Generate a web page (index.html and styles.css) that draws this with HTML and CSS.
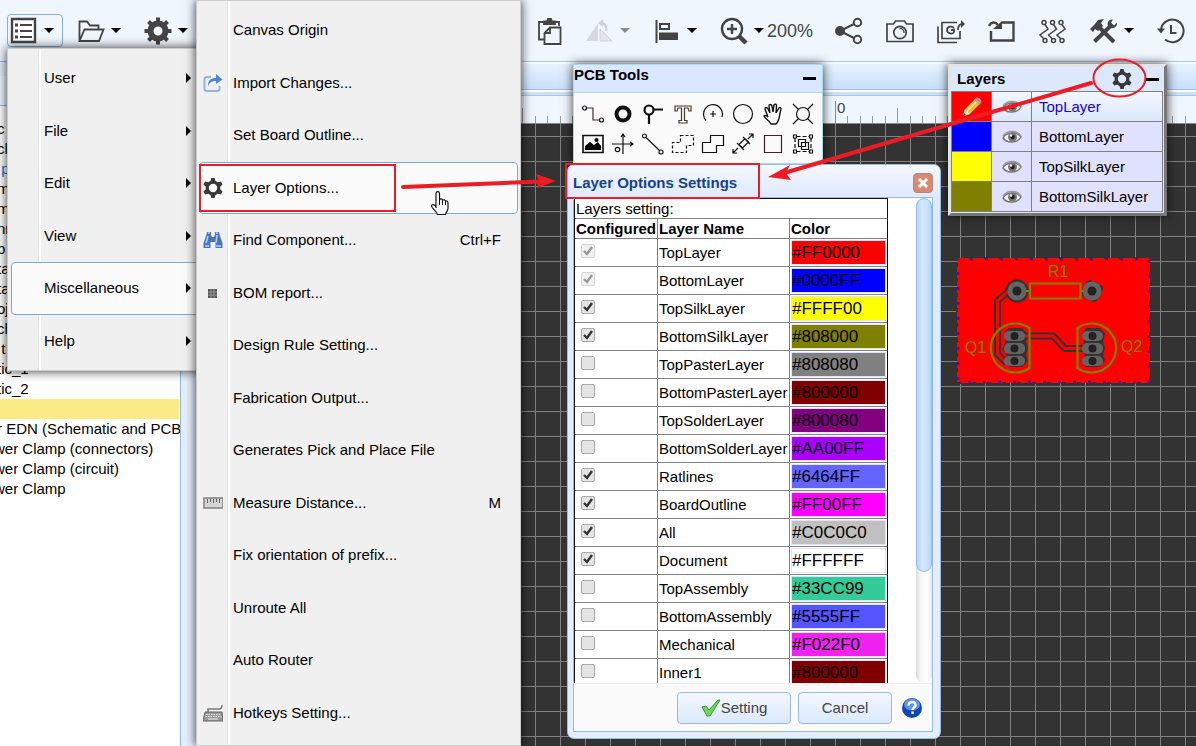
FILE: index.html
```html
<!DOCTYPE html>
<html lang="en">
<head>
<meta charset="utf-8">
<title>PCB Editor</title>
<link rel="stylesheet" href="styles.css">
</head>
<body>
<svg class="defs" aria-hidden="true">
  <symbol id="gear6" viewBox="0 0 20 20"><circle cx="10" cy="10" r="5.800" fill="none" stroke="#383838" stroke-width="3.200"/><g fill="#383838"><path id="tooth" d="M7.500 3.500L8.300 0h3.400l.8 3.500z"/><use href="#tooth" transform="rotate(60 10 10)"/><use href="#tooth" transform="rotate(120 10 10)"/><use href="#tooth" transform="rotate(180 10 10)"/><use href="#tooth" transform="rotate(240 10 10)"/><use href="#tooth" transform="rotate(300 10 10)"/></g></symbol>
  <symbol id="eye" viewBox="0 0 20 14"><path d="M1 8C4 2 15 1 19 7c-3 6-14 7-18 1z" fill="#f4f4f6" stroke="#777" stroke-width="1.500"/><path d="M1 6C5 0 15 0 19 6" fill="none" stroke="#999" stroke-width="1.500"/><circle cx="10.500" cy="7" r="4.500" fill="#777"/><circle cx="10.500" cy="7" r="2.300" fill="#222"/><circle cx="9" cy="5.500" r="1.300" fill="#eee"/></symbol>
</svg>

<header class="toolbar">
  <div class="tools-left">
    <button class="tool framed" aria-label="Menu"><svg class="ic" viewBox="0 0 28 28"><path d="M2 2h23v23H2z" fill="#fff" stroke="#444" stroke-width="2.400"/><path d="M10 8h12M10 14h12M10 20h12" stroke="#444" stroke-width="2"/><path d="M5 8h3M5 14h3M5 20h3" stroke="#444" stroke-width="3"/></svg><i class="caret"></i></button>
    <button class="tool" aria-label="Open"><svg class="ic" viewBox="0 0 28 28" fill="none" stroke="#444" stroke-width="1.800"><path d="M2.500 24V4.500h7.500l3 4h8.500v4M2.500 24l5-11.500h19L22 24z"/></svg><i class="caret"></i></button>
    <button class="tool" aria-label="Settings"><svg class="ic" viewBox="0 0 28 28"><circle cx="14" cy="14" r="7.500" fill="none" stroke="#444" stroke-width="6"/><g stroke="#444" stroke-width="4"><path d="M14 .5v5M14 22.500v5M.5 14h5M22.500 14h5M4.500 4.500l3.500 3.500M20 20l3.500 3.500M4.500 23.500L8 20M20 8l3.500-3.500"/></g></svg><i class="caret"></i></button>
  </div>
  <div class="tools-right">
    <button class="tool" aria-label="Paste"><svg class="ic" viewBox="0 0 28 28" fill="none" stroke="#444" stroke-width="1.800"><path d="M9 22.500H4V5h4M20 5h4v4"/><path d="M9 7V4.500h3L13 2h3l1 2.500h3V7z" fill="#444"/><path d="M15 10.500h10.500V27H9.500V16zM15 10.500V16H9.500"/></svg></button>
    <button class="tool" aria-label="Mirror" disabled><svg class="ic" viewBox="0 0 28 28"><path d="M0 24L12 6v18z" fill="#d4d8dc"/><path d="M14 24V12l12 12z" fill="#e3e7ea" stroke="#cfd3d7"/><path d="M20 14c1-5-1-8-5-8" fill="none" stroke="#cfd3d7" stroke-width="2.400"/><path d="M17 2v8l-5-4z" fill="#cfd3d7"/></svg><i class="caret dim"></i></button>
    <button class="tool" aria-label="Align"><svg class="ic" viewBox="0 0 28 28"><path d="M3.500 3v23" stroke="#444" stroke-width="2"/><path d="M7 7h9v5H7z" fill="none" stroke="#444" stroke-width="2"/><path d="M6 15.500h19V23H6z" fill="#444"/></svg><i class="caret"></i></button>
    <button class="tool" aria-label="Zoom"><svg class="ic" viewBox="0 0 28 28" fill="none" stroke="#444"><circle cx="12" cy="12" r="10" stroke-width="2.400"/><path d="M12 7v10M7 12h10" stroke-width="2.400"/><path d="M19 19l7 7" stroke-width="4.500"/></svg><i class="caret"></i><span class="zoom">200%</span></button>
    <button class="tool" aria-label="Share"><svg class="ic" viewBox="0 0 28 28" fill="none" stroke="#444" stroke-width="2"><path d="M5 14l17-8.500M5 14l17 8.500"/><circle cx="5" cy="14" r="4" fill="#444"/><circle cx="22.500" cy="5.500" r="3.700" fill="#eff6fe"/><circle cx="22.500" cy="22.500" r="3.700" fill="#eff6fe"/></svg></button>
    <button class="tool" aria-label="Screenshot"><svg class="ic" viewBox="0 0 28 28" fill="none" stroke="#444" stroke-width="1.700"><path d="M1 7h6.500l2-3h9l2 3H27v17.500H1z"/><circle cx="14" cy="15.500" r="6.200"/><path d="M13.500 11.500a4 4 0 0 1 4.500 4.500" stroke-width="1.300"/></svg></button>
    <button class="tool" aria-label="Generate Gerber"><svg class="ic" viewBox="0 0 28 28" fill="none" stroke="#444" stroke-width="1.700"><path d="M20 5.500H5v16h18V14M1 9.500V25.500h19"/><path d="M17 11.500c-1-3-7-2.500-7 1.500s6 4.500 7 2V13h-3" stroke-width="1.800"/><path d="M21 13c0-5 2-6 5-6"/><path d="M24 3l4 4-4 4z" fill="#444" stroke="none"/></svg></button>
    <button class="tool" aria-label="Import"><svg class="ic" viewBox="0 0 28 28" fill="none" stroke="#444" stroke-width="2.400"><path d="M14 5.500h11.500v18H3V14"/><path d="M1 9c2-4 6-5 9-1" stroke-width="2.400"/><path d="M5 12h9V4z" fill="#444" stroke="none"/></svg></button>
    <button class="tool" aria-label="Auto Router"><svg class="ic" viewBox="0 0 28 28" fill="none" stroke="#444" stroke-width="1.500"><g><circle cx="5" cy="5.500" r="2"/><path d="M6 7.500l3 4.500-8 6 4 4"/><circle cx="6" cy="23.500" r="2"/></g><g transform="translate(8.500)"><circle cx="5" cy="5.500" r="2"/><path d="M6 7.500l3 4.500-8 6 4 4"/><circle cx="6" cy="23.500" r="2"/></g><g transform="translate(17)"><circle cx="5" cy="5.500" r="2"/><path d="M6 7.500l3 4.500-8 6 4 4"/><circle cx="6" cy="23.500" r="2"/></g></svg></button>
    <button class="tool" aria-label="Tools"><svg class="ic" viewBox="0 0 28 28" fill="none" stroke="#444"><path d="M9 10l15 15" stroke-width="4"/><path d="M0 12l5-5 3-4 6-1-3 4 2 3-5 5-3-2-2 3z" fill="#444" stroke="none"/><path d="M4.500 24.500L20 9.500" stroke-width="4"/><path d="M23 2.500c-5-1-7 5-4 7.500s8.500 1 8-4.500l-3 3-3-3z" fill="#444" stroke="none"/></svg><i class="caret"></i></button>
    <button class="tool" aria-label="History"><svg class="ic" viewBox="0 0 28 28" fill="none" stroke="#444" stroke-width="2"><path d="M4 13a11.300 11.300 0 1 1 4 9.500M14 8v8h5.500"/><path d="M0 11.500h8l-4 5z" fill="#444" stroke="none"/></svg></button>
  </div>
</header>

<main class="main">
  <aside class="side">
    <div class="side-tabs"></div>
    <ul class="tree">
      <li>c</li><li>ch</li><li class="blue">.p</li><li>m</li><li>mp</li><li>nr</li><li>b</li><li>ta</li><li>ta</li><li>oje</li><li>ch</li><li>&nbsp;t</li><li>tic_1</li><li>tic_2</li><li class="on"></li><li>r EDN (Schematic and PCB</li><li class="deep">wer Clamp (connectors)</li><li class="deep">wer Clamp (circuit)</li><li class="deep">wer Clamp</li>
    </ul>
  </aside>
  <section class="work">
    <div class="tabs"></div>
    <svg class="ruler">
      <defs><pattern id="ticks" x="14" width="125" height="27" patternUnits="userSpaceOnUse"><path d="M12.500 20v7M25.500 20v7M37.500 20v7M50.500 20v7M75.500 20v7M87.500 20v7M100.500 20v7M112.500 20v7M.5 12v15M62.500 12v15" stroke="#999"/></pattern></defs>
      <rect width="100%" height="27" fill="url(#ticks)"/>
      <path d="M639.500 5v22" stroke="#888"/><text x="641" y="17">0</text>
    </svg>
    <svg class="canvas">
      <defs><pattern id="grid" width="25" height="25" x="14" y="12" patternUnits="userSpaceOnUse"><path d="M.5 0v25M0 .5h25" stroke="#808080"/></pattern></defs>
      <rect width="100%" height="100%" fill="url(#grid)"/>
      <g transform="translate(-196 -124)">
        <rect x="957" y="258" width="193" height="125" fill="#f00"/>
        <rect x="958" y="259" width="191" height="123" fill="none" stroke="#7a0080" stroke-width="3" stroke-dasharray="3 12" stroke-dashoffset="-12"/>
        <rect x="957" y="258" width="193" height="125" fill="none" stroke="#333" stroke-width="2" stroke-dasharray="4 11" stroke-dashoffset="-12"/>
        <g fill="#333"><circle cx="1017" cy="291" r="11.500"/><circle cx="1092" cy="291" r="11" stroke="#f00" stroke-width="3" stroke-dasharray="11 6"/>
          <path d="M1004 334l4-6h14l6 6-2 8 2 6-2 7 2 6-6 6h-13l-5-6 3-6-5-6 4-7zM1082 334l4-6h14l5 6-2 8 2 6-2 7 2 6-6 6h-13l-4-6 3-6-4-6 3-7z"/></g>
        <g fill="none"><path d="M1012 288l-14.500 13v53l9 9M1025 336h28l12 12.500h20" stroke="#333" stroke-width="7"/><path d="M1012 288l-14.500 13v53l9 9M1025 336h28l12 12.500h20" stroke="#f00" stroke-width="3"/></g>
        <g fill="#646464"><circle cx="1017" cy="291" r="9.500"/><circle cx="1092" cy="291" r="9.500"/>
          <rect x="1004" y="331" width="21" height="10" rx="5"/><rect x="1004" y="343" width="21" height="11" rx="5"/><rect x="1004" y="356" width="21" height="10" rx="5"/>
          <rect x="1082" y="331" width="21" height="10" rx="5"/><rect x="1082" y="343" width="21" height="11" rx="5"/><rect x="1082" y="356" width="21" height="10" rx="5"/></g>
        <g fill="#222"><circle cx="1017" cy="291" r="4.500"/><circle cx="1092" cy="291" r="4.500"/><circle cx="1014.500" cy="336" r="4"/><circle cx="1014.500" cy="348.500" r="4"/><circle cx="1014.500" cy="361" r="4"/><circle cx="1092.500" cy="336" r="4"/><circle cx="1092.500" cy="348.500" r="4"/><circle cx="1092.500" cy="361" r="4"/></g>
        <g fill="none" stroke="#808000" stroke-width="2.200"><path d="M1030 283.500h50.500v15H1030zM1026 291h4M1080 291h3"/><path d="M1029.500 328v40a24.500 24.500 0 1 1 0-40z"/><path d="M1077.500 328v40a24.500 24.500 0 1 0 0-40z"/></g>
        <g class="silk"><text x="1048" y="277">R1</text><text x="965" y="353">Q1</text><text x="1121" y="352">Q2</text></g>
      </g>
    </svg>
  </section>
</main>

<section class="win pcb">
  <header class="pcb-head"><h2>PCB Tools</h2><button class="min" aria-label="Minimize"></button></header>
  <div class="pcb-grid">
    <button aria-label="Track"><svg viewBox="0 0 24 24"><circle cx="3.500" cy="6" r="2"/><circle cx="20.500" cy="18" r="2"/><path d="M5.500 6h6.500v12h6.500" stroke="#502040"/></svg></button>
    <button aria-label="Pad"><svg viewBox="0 0 24 24"><circle cx="12" cy="12" r="6.500" stroke-width="4"/></svg></button>
    <button aria-label="Via"><svg viewBox="0 0 24 24"><circle cx="8" cy="8" r="4.500" stroke-width="2.200"/><path d="M12.500 7.500H22M8 12.500V22" stroke-width="2.200"/></svg></button>
    <button aria-label="Text"><svg viewBox="0 0 24 24"><path d="M4 4h16v5h-2l-1-3h-3.500v12.500h2.500V21H8v-2.500h2.500V6H7L6 9H4z" stroke="#4a3a28"/></svg></button>
    <button aria-label="Arc"><svg viewBox="0 0 24 24"><path d="M21 15A9.500 9.500 0 1 0 5 18.500M12 9v6M9 12h6"/></svg></button>
    <button aria-label="Circle"><svg viewBox="0 0 24 24"><circle cx="12" cy="12" r="9.500"/></svg></button>
    <button aria-label="Move"><svg viewBox="0 0 24 24"><path d="M10 22c-2-4-6-5-7-8 1-1.500 3 0 4 1L4 7c0-2 2-2 3 0l2 4-1-7c0-2 2.500-2 3 0l1 6 1-7c1-1.500 2.500-1 2.500 1L15 11l3-5c1-1 2.500 0 2 1.500-2 5-1 11-5 14.500z" stroke-width="1.400"/></svg></button>
    <button aria-label="Hole"><svg viewBox="0 0 24 24"><circle cx="12" cy="12" r="6.500"/><path d="M2 2l5.500 5.500M22 2l-5.500 5.500M2 22l5.500-5.500M22 22l-5.500-5.500"/></svg></button>
    <button aria-label="Image"><svg viewBox="0 0 24 24"><path d="M2 3.500h20v17H2z" stroke-width="1.600"/><path d="M4 18v-4l5-4 4 3 4-3 3 4v4z" fill="#000" stroke="none"/><circle cx="15.500" cy="8" r="1.500" fill="#000"/></svg></button>
    <button aria-label="Canvas Origin"><svg viewBox="0 0 24 24"><path d="M12 2v20M1 12h21M10 5l2-3 2 3M19 10l3 2-3 2"/><circle cx="6.500" cy="17.500" r="2.200"/></svg></button>
    <button aria-label="Dimension"><svg viewBox="0 0 24 24"><circle cx="3.500" cy="4" r="2"/><circle cx="20" cy="20" r="2"/><path d="M5 5.500l13.500 13"/></svg></button>
    <button aria-label="Copper Area"><svg viewBox="0 0 24 24"><path d="M9.500 3.500h13v10h-7v7h-14v-10h8z" stroke-dasharray="3 2"/></svg></button>
    <button aria-label="Solid Region"><svg viewBox="0 0 24 24"><path d="M9.500 3.500h13v10h-7v7h-14v-10h8z"/></svg></button>
    <button aria-label="Protractor"><svg viewBox="0 0 24 24"><path d="M2 21l5-5M17 7l5-5M22 6V2h-4M2 17v4h4M8 12.500l6-6 3.500 3.500-6 6zM6 11l7 7M12 5l7 7"/></svg></button>
    <button aria-label="Rect"><svg viewBox="0 0 24 24"><path d="M3.500 3.500h17v17h-17z" stroke="#3a2030"/></svg></button>
    <button aria-label="Group"><svg viewBox="0 0 24 24"><path d="M7.500 7.500h7v7h-7zM10.500 10.500h7v7h-7zM2.500 3h3v3h-3zM18.500 3h3v3h-3zM2.500 18h3v3h-3zM18.500 18h3v3h-3z"/><path d="M5.500 4.500h13M4 6v12M20 6v12M5.500 19.500h13" stroke-dasharray="4 2"/></svg></button>
  </div>
</section>

<section class="win layers">
  <header class="lay-head"><h2>Layers</h2><button class="plain" aria-label="Layer options"><svg width="20" height="20"><use href="#gear6"/></svg></button><button class="min" aria-label="Minimize"></button></header>
  <table class="lay-table">
    <tr class="sel"><td class="c-red"><svg class="pencil" width="22" height="22" viewBox="0 0 22 22"><path d="M2 20l2-7L14 3l5 5L9 18z" fill="#f7b42c" stroke="#a86a10"/><path d="M6 15L16 5" stroke="#ffe08a" stroke-width="2"/><path d="M2 20l2-7 5 5z" fill="#fbe6c4"/><path d="M2 20l1-3 2 2z" fill="#222"/><path d="M13 4l2-2 5 5-2 2z" fill="#aaa"/><path d="M15 2c2-2 7 3 5 5z" fill="#ef8a8a"/></svg></td><td><svg width="20" height="14"><use href="#eye"/></svg></td><td>TopLayer</td></tr>
    <tr><td class="c-blue"></td><td><svg width="20" height="14"><use href="#eye"/></svg></td><td>BottomLayer</td></tr>
    <tr><td class="c-yellow"></td><td><svg width="20" height="14"><use href="#eye"/></svg></td><td>TopSilkLayer</td></tr>
    <tr><td class="c-olive"></td><td><svg width="20" height="14"><use href="#eye"/></svg></td><td>BottomSilkLayer</td></tr>
  </table>
</section>

<section class="win dialog">
  <header class="dlg-head"><h2>Layer Options Settings</h2><button class="close" aria-label="Close"><svg width="12" height="12" viewBox="0 0 12 12"><path d="M2 2l8 8M10 2l-8 8" stroke="#fff" stroke-width="3"/></svg></button></header>
  <div class="dlg-body">
    <div class="scroller">
      <table class="opts">
        <colgroup><col class="w1"><col class="w2"><col class="w3"></colgroup>
        <tbody id="rows">
          <tr><td colspan="3">Layers setting:</td></tr>
          <tr><th>Configured</th><th>Layer Name</th><th>Color</th></tr>
        </tbody>
      </table>
      <div class="bar"><div class="thumb"></div></div>
    </div>
    <footer class="dlg-foot">
      <button class="btn wide"><svg width="20" height="20" viewBox="0 0 20 20"><path d="M1 9l4-1 3 4L17 2h2L9 18H6z" fill="#6fd45a" stroke="#3a9a30"/></svg>Setting</button>
      <button class="btn">Cancel</button>
      <button class="plain" aria-label="Help"><svg width="20" height="20" viewBox="0 0 20 20"><circle cx="10" cy="10" r="10" fill="#0d47b5"/><ellipse cx="10" cy="6.500" rx="8" ry="6" fill="#5b93e6"/><path d="M6.500 7.500c0-5 7.500-4.500 7 0-.3 2-3 2.200-3 4.500M10.500 13.500v2.500" fill="none" stroke="#fff" stroke-width="2.400"/></svg></button>
    </footer>
  </div>
</section>

<nav class="menu main-menu">
  <ul>
    <li><a href="#">User</a></li><li><a href="#">File</a></li><li><a href="#">Edit</a></li><li><a href="#">View</a></li><li class="hot"><a href="#">Miscellaneous</a></li><li><a href="#">Help</a></li>
  </ul>
</nav>
<nav class="menu sub-menu">
  <ul>
    <li><a href="#">Canvas Origin</a></li>
    <li><svg viewBox="0 0 20 20"><path d="M8 4H4a2.500 2.500 0 0 0-2.500 2.500v9A2.500 2.500 0 0 0 4 18h10a2.500 2.500 0 0 0 2.500-2.500V13" fill="none" stroke="#8fb4e6" stroke-width="2"/><path d="M5 13c0-6 3-8 8-8V1l6.500 5.500L13 11V8C9 8 7 9 5 13z" fill="#4f86cf"/></svg><a href="#">Import Changes...</a></li>
    <li><a href="#">Set Board Outline...</a></li>
    <li class="hot"><svg><use href="#gear6"/></svg><a href="#">Layer Options...</a></li>
    <li><svg viewBox="0 0 20 20"><path d="M4 2h4v3l1 2h2l1-2V2h4l1 4 2.500 7v5h-7v-6h-5v6h-7v-5L3 6z" fill="#4a76b8"/><path d="M3 13l2-7M13 13l1-8M5 3h2M13 3h2M2 16h4M13 16h5" stroke="#b9d0f0" stroke-width="1.500"/></svg><a href="#">Find Component...</a><kbd>Ctrl+F</kbd></li>
    <li><svg viewBox="0 0 20 20"><path d="M5 6h9v9H5z" fill="#555"/><path d="M5 9h9M5 12h9M8 6v9M11 6v9" stroke="#aaa" stroke-width=".8"/></svg><a href="#">BOM report...</a></li>
    <li><a href="#">Design Rule Setting...</a></li>
    <li><a href="#">Fabrication Output...</a></li>
    <li><a href="#">Generates Pick and Place File</a></li>
    <li><svg viewBox="0 0 20 20"><path d="M1 5h19v10H1z" fill="#d4d4d4" stroke="#808080" stroke-width="1.500"/><path d="M4.500 6v4M7.500 6v3M10.500 6v4M13.500 6v3M16.500 6v4" stroke="#666"/></svg><a href="#">Measure Distance...</a><kbd>M</kbd></li>
    <li><a href="#">Fix orientation of prefix...</a></li>
    <li><a href="#">Unroute All</a></li>
    <li><a href="#">Auto Router</a></li>
    <li><svg viewBox="0 0 20 20"><path d="M5 9V6h11c2 0 3-1 3-4" fill="none" stroke="#777" stroke-width="1.500"/><path d="M2 9h17l1 9H0z" fill="#999" stroke="#666"/><path d="M3 11.500h15M2.500 13.500h16" stroke="#e8e8e8" stroke-dasharray="1.500 1"/><path d="M5 16h10" stroke="#eee"/></svg><a href="#">Hotkeys Setting...</a></li>
  </ul>
</nav>

<svg class="notes" width="1196" height="746" viewBox="0 0 1196 746" aria-hidden="true">
  <g fill="none" stroke="#ed1c24">
    <rect x="200" y="165" width="195" height="46" stroke-width="2"/>
    <rect x="566" y="164" width="193" height="34" stroke-width="2"/>
    <ellipse cx="1119.500" cy="78" rx="26" ry="18.500" stroke-width="2"/>
    <path d="M403 187l138-5.500M1091 83L784 173" stroke-width="4" stroke-linecap="round"/>
  </g>
  <path d="M556 181l-20-7 3 7-2 7zM768 177l22-12-4 8 5 7z" fill="#ed1c24"/>
  <path d="M436 208V193.500c0-2.500 3.500-2.500 3.500 0v6c1-1.200 3-.8 3 .8 1-1 3-.5 3 1 1-.8 2.500 0 2.500 1.700v5c0 3-2 4-2.500 6.500h-8c-.5-3-5.500-6-6-8.500 0-2 3-2 4.500 1z" fill="#fff" stroke="#111" stroke-width="1.200"/>
  <path d="M439.500 200v5M442.500 201v4M445.500 202v3" stroke="#111"/>
</svg>
<script src="layers.js"></script>
</body>
</html>
```
FILE: layers.js
```js
// name, colour, state: 0 = off, 1 = on, 2 = always on
const layers = [
  ["TopLayer", "#FF0000", 2], ["BottomLayer", "#0000FF", 2], ["TopSilkLayer", "#FFFF00", 1],
  ["BottomSilkLayer", "#808000", 1], ["TopPasterLayer", "#808080", 0], ["BottomPasterLayer", "#800000", 0],
  ["TopSolderLayer", "#800080", 0], ["BottomSolderLayer", "#AA00FF", 0], ["Ratlines", "#6464FF", 1],
  ["BoardOutline", "#FF00FF", 1], ["All", "#C0C0C0", 1], ["Document", "#FFFFFF", 1],
  ["TopAssembly", "#33CC99", 0], ["BottomAssembly", "#5555FF", 0], ["Mechanical", "#F022F0", 0],
  ["Inner1", "#800000", 0]
];
document.getElementById("rows").insertAdjacentHTML("beforeend", layers.map(([name, color, state], i) =>
  `<tr class="layer"><td><input type="checkbox" id="l${i}"${state ? " checked" : ""}${state === 2 ? " disabled" : ""}></td>` +
  `<td><label for="l${i}">${name}</label></td>` +
  `<td><input type="text" class="color" aria-label="${name} color" value="${color}" style="background:${color}"></td></tr>`
).join(""));
```
FILE: styles.css
```css
* { box-sizing: border-box; }
body {
  margin: 0;
  height: 100vh;
  overflow: hidden;
  position: relative;
  display: flex;
  flex-direction: column;
  font: 15px/20px "Liberation Sans", Arial, sans-serif;
  color: #000;
}
ul { list-style: none; margin: 0; padding: 0; }
h2 { margin: 0; font-size: 15px; line-height: 20px; font-weight: bold; flex: 1; }
a { color: inherit; text-decoration: none; }
button { font: inherit; border: 0; background: none; padding: 0; margin: 0; }
.defs { position: absolute; width: 0; height: 0; }
.plain { display: flex; }

/* toolbar */
.toolbar { flex: none; height: 61px; background: #eff6fe; display: flex; align-items: center; }
.tools-left { flex: none; width: 535px; padding-left: 7px; display: flex; align-items: center; gap: 23px; }
.tools-right { display: flex; align-items: center; gap: 23px; }
.tool { display: flex; align-items: center; flex: none; }
.framed { height: 33px; padding: 0 8px 0 2px; margin-right: -9px; border: 1px solid #86aedb; border-radius: 4px; }
.ic { width: 28px; height: 28px; flex: none; }
.caret { margin-left: 6px; border: 5px solid transparent; border-top-color: #000; border-bottom: 0; }
.dim { border-top-color: #888; }
.zoom { font-size: 18px; color: #444; margin-left: 3px; margin-right: -1px; }

/* page areas */
.main { flex: 1; min-height: 0; display: flex; background: #e6effc; }
.side { flex: none; width: 181px; background: #fff; border-top: 1px solid #95b8e7; border-right: 1px solid #95b8e7; overflow: hidden; }
.side-tabs { height: 44px; margin-bottom: 13px; background: #eef5fd; border-top: 14px solid #e2ecfa; border-bottom: 1px solid #95b8e7; }
.tree li { height: 20px; margin-left: -3px; white-space: nowrap; }
.tree .deep { margin-left: -6px; }
.tree .on { background: #fbec88; margin-right: 1px; }
.tree .blue { color: #2a7ad0; }
.work { flex: 1; min-width: 0; margin-left: 15px; display: flex; flex-direction: column; }
.tabs { flex: none; height: 35px; border-top: 1px solid #a9c6e8; border-bottom: 1px solid #a9c6e8; background: linear-gradient(#fff 0 1px, #e9f3ff 2px, #c7dffb 27px, #9fc0e8 27px 28px, #fff 28px 30px, #cfe1f6 30px); }
.ruler { flex: none; width: 100%; height: 28px; background: #f0f6fd; border-bottom: 1px solid #888; font-size: 15px; fill: #444; }
.canvas { flex: 1; min-height: 0; width: 100%; background: #333; }
.silk { font-size: 16px; fill: #808000; }

/* floating windows */
.win { position: absolute; box-shadow: 0 0 10px rgba(0,0,0,.75); }
.min { width: 13px; height: 3px; background: #000; }
.pcb { left: 573px; top: 64px; width: 250px; border: 1px solid #add8e6; background: #fafafa; }
.pcb-head { height: 28px; display: flex; align-items: center; padding-right: 6px; background: #d9e8fe; border-bottom: 1px solid #add8e6; }
.pcb-head h2 { align-self: flex-start; }
.pcb-grid { display: grid; grid-template-columns: repeat(8, 30px); grid-auto-rows: 30px; padding: 6px 4px 4px; }
.pcb-grid button { display: flex; align-items: center; justify-content: center; }
.pcb-grid svg { width: 24px; height: 24px; fill: none; stroke: #111; stroke-width: 1.200; }
.layers { left: 948px; top: 64px; width: 219px; padding-bottom: 1px; border: 3px solid; border-color: #e4e4e4 #777 #777 #e4e4e4; background: #dbe8fe; }
.lay-head { height: 24px; display: flex; align-items: center; gap: 14px; padding: 0 5px 0 6px; }
.lay-table { width: 212px; border-collapse: collapse; border: 1px solid #111; background: #e0e0ff; }
.lay-table td { height: 30px; padding: 0; border: 1px solid #808080; text-align: center; }
.lay-table td:first-child { width: 40px; }
.lay-table td:nth-child(2) { width: 40px; }
.lay-table td:last-child { text-align: left; padding-left: 7px; }
.lay-table svg { display: block; margin: auto; }
.lay-table .sel { color: #2000e0; background: linear-gradient(#f2f7ff, #dbe7fa); }
.c-red { background: #f00; }
.c-blue { background: #00f; }
.c-yellow { background: #ff0; }
.c-olive { background: #808000; }

/* layer options dialog */
.dialog { left: 567px; top: 164px; width: 374px; padding: 0 7px 6px 5px; border: 1px solid #95bbe8; border-radius: 7px; background: linear-gradient(#f4f8ff, #dfe9fd 33px, #e6eefe); box-shadow: none; }
.dlg-head { height: 32px; display: flex; align-items: center; padding-top: 3px; color: #15428b; }
.close { width: 20px; height: 20px; display: flex; align-items: center; justify-content: center; border: 1px solid #b98578; border-radius: 4px; background: #d98a72; }
.dlg-body { border: 1px solid #95b8e7; background: #fff; }
.scroller { height: 485px; display: flex; justify-content: space-between; overflow: hidden; }
.opts { width: 314px; table-layout: fixed; border: 1px solid #111; border-spacing: 0; align-self: flex-start; }
.w1 { width: 83px; }
.w2 { width: 132px; }
.w3 { width: 97px; }
.opts td, .opts th { height: 20px; padding: 0 0 0 1px; line-height: 19px; text-align: left; white-space: nowrap; border-bottom: 1px solid #808080; }
.opts td:not(:last-child), .opts th:not(:last-child) { border-right: 1px solid #808080; }
.opts .layer td { height: 28px; }
.opts input { display: block; margin: 0; }
.opts [type=checkbox] { appearance: none; width: 14px; height: 14px; margin: 0 0 3px 5px; border: 1px solid #aaa; border-radius: 2px; background: #e4e4e4; }
.opts [type=checkbox]:checked { background: #e4e4e4 url('data:image/svg+xml,<svg xmlns="http://www.w3.org/2000/svg" viewBox="0 0 12 12"><path d="M2 6l3 3 5-7" fill="none" stroke="%23333" stroke-width="2.400"/></svg>'); }
.opts [type=checkbox]:disabled { opacity: .5; }
.opts .color { width: 95px; height: 25px; padding: 0; border: 1px solid #e0e0ff; font: 17px/22px "Liberation Sans", Arial, sans-serif; color: #000; }
.bar { width: 16px; border-radius: 8px; background: linear-gradient(90deg, #ddd, #f6f6f6 30%, #fff 70%, #e8e8e8); }
.thumb { height: 374px; border: 1px solid #8fbdf0; border-radius: 8px; background: linear-gradient(90deg, #b8d8fb, #d4e8ff 40%, #cce3ff 70%, #b4d6fb); }
.dlg-foot { height: 48px; display: flex; align-items: center; justify-content: flex-end; gap: 7px; padding-right: 10px; background: #fafafa; border-top: 1px solid #eee; }
.dlg-foot .plain { margin-left: 3px; }
.btn { display: flex; align-items: center; justify-content: center; width: 94px; height: 32px; border: 1px solid #95bbe8; border-radius: 4px; color: #444; background: linear-gradient(#f4f8ff, #dbe8fd); }
.wide { width: 114px; }

/* menus */
.menu { position: absolute; border: 1px solid #ccc; background: #f0f0f0; box-shadow: 0 0 10px rgba(0,0,0,.8); }
.menu ul { display: grid; grid-auto-rows: 1fr; }
.menu::before { content: ""; position: absolute; top: 0; bottom: 0; left: 30px; width: 2px; background: #fff; border-left: 1px solid #e0e0e0; }
.menu li { position: relative; display: flex; align-items: center; border: 1px solid transparent; border-radius: 4px; }
.menu a { flex: 1; }
.menu .hot { background: #fbfbfb; border-color: #7aaad8; }
.main-menu { left: 7px; top: 48px; width: 200px; padding: 3px; }
.main-menu ul { height: 315px; }
.main-menu li { padding-left: 32px; }
.main-menu li::after { content: ""; border: 5px solid transparent; border-left-color: #000; border-right: 0; margin-right: 11px; }
.sub-menu { left: 196px; top: 0; width: 325px; min-height: 100%; padding: 3px 2px; }
.sub-menu ul { height: 735px; }
.sub-menu li { padding: 0 16px 0 33px; }
.sub-menu svg { position: absolute; left: 3px; width: 20px; height: 20px; }
.sub-menu kbd { font: inherit; }

.notes { position: absolute; left: 0; top: 0; pointer-events: none; }
```
